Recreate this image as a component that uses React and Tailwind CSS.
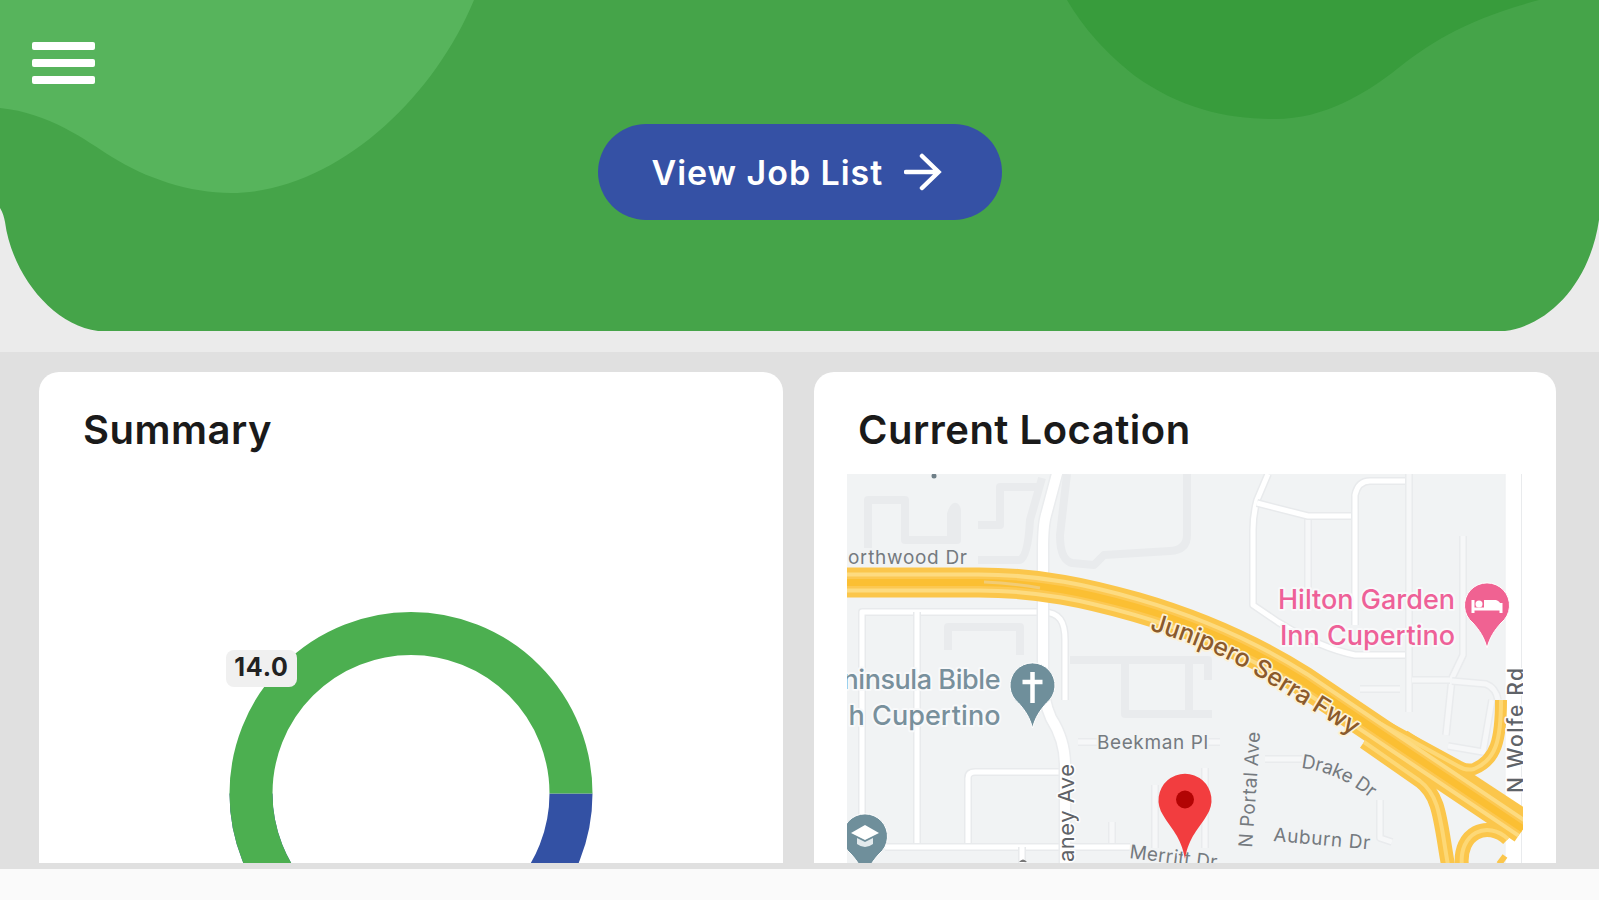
const minorRoads = [
  'M862 863 V612 H1042 C1060 612 1065 622 1065 640 V700',
  'M917 612 V847',
  'M968 846 V778 Q968 772 975 772 H1062',
  'M885 847 H1130',
  'M1268 474 L1257 500 Q1253 515 1253 530 V605 L1278 622 Q1320 648 1355 655 H1405',
  'M1257 503 L1308 516 H1355',
  'M1355 625 V495 Q1358 481 1370 481 H1405',
  'M1022 847 V863',
];

const faintRoads = [
  'M1308 516 V600',
  'M1409 474 V712',
  'M1463 536 V655 L1452 678 L1446 735',
  'M1452 681 L1486 684 Q1496 688 1498 700',
  'M1448 746 L1483 752 L1492 700',
  'M1412 680 H1450',
  'M1360 689 H1400',
  'M1265 759 H1302',
  'M1380 800 V838 L1392 842',
  'M1112 822 V848',
  'M1155 785 V848',
  'M1205 768 V848',
  'M1078 742 H1098',
  'M1208 742 H1220',
];

const blocks = [
  'M868 548 V500 H905 V540 H957 V510 Q955 502 951 514 V540',
  'M978 525 H1000 V487 H1040',
  'M978 560 H1020 Q1028 556 1030 520 L1042 478',
  'M1067 474 L1060 535 Q1060 560 1072 563 L1094 565 L1104 555 L1170 551 Q1187 550 1187 535 V474',
  'M948 650 V627 H1020 V655',
  'M1070 660 H1208 V680',
  'M1125 662 V714 H1212',
  'M1189 662 V712',
  'M1078 742 H1095',
];

const freeway = 'M847 582.5 H975 C1040 582 1090 594 1136 607 C1195 624 1254 650 1303 681 L1380 733 L1523 829';
const eastRamp = 'M1501 700 C1501 740 1496 760 1474 769 Q1466 771 1458 766 L1370 718';
const westRamp = 'M1364 742 L1420 781 C1440 796 1440 820 1448 865';
const loopRamp = 'M1462 867 C1458 832 1488 820 1508 839';

function Road({ d, width, color, casing }) {
  return (
    <>
      <path d={d} stroke={casing} strokeWidth={width + 3} />
      <path d={d} stroke={color} strokeWidth={width} />
    </>
  );
}

function PlacePin({ x, y, color, children }) {
  return (
    <g transform={`translate(${x} ${y})`}>
      <path d="M0 43 C-3 32 -7 26 -14 18 A22.5 22.5 0 1 1 14 18 C7 26 3 32 0 43Z" fill={color} stroke="#fff" strokeWidth="1" />
      {children}
    </g>
  );
}

function MapView() {
  return (
    <svg viewBox="847 474 676 389" className="block h-[389px] w-[676px]" fill="none" fontFamily="Inter, sans-serif">
      <defs>
        <path id="drake" d="M1301 768 Q1340 772 1375 802" />
        <path id="junipero" d="M1149 630 C1190 642 1225 656 1257 676 L1365 743" />
      </defs>
      <rect x="847" y="474" width="676" height="389" fill="#f1f3f4" />

      <g stroke="#e9ebed" strokeWidth="8" strokeLinejoin="round">
        {blocks.map(d => <path key={d} d={d} />)}
      </g>

      <g strokeLinejoin="round">
        {faintRoads.map(d => <Road key={d} d={d} width={5} color="#f6f7f8" casing="#e9ebed" />)}
        {minorRoads.map(d => <Road key={d} d={d} width={5} color="#ffffff" casing="#e8eaec" />)}
        <Road d="M1058 470 L1046 515 Q1043 525 1043 550 V680 Q1043 700 1051 718 Q1065 740 1065 765 V863" width={10} color="#ffffff" casing="#eaecee" />
      </g>

      {/* Wolfe Rd */}
      <rect x="1504.500" y="474" width="19" height="389" fill="#fff" />
      <path d="M1505 474 V863 M1521.500 474 V863" stroke="#e9ebed" />

      {/* freeway and its ramps */}
      <g strokeLinejoin="round">
        <path d={eastRamp} stroke="#fbc64b" strokeWidth="12" />
        <path d={westRamp} stroke="#fbc64b" strokeWidth="14" />
        <path d={loopRamp} stroke="#fbc64b" strokeWidth="14" />
        <path d="M1499 864 L1505 856" stroke="#fbc64b" strokeWidth="6" />
        <path d={freeway} stroke="#fbc64b" strokeWidth="30" />
        <path d="M1400 742 L1523 823" stroke="#fbc64b" strokeWidth="27" />
        <path d={eastRamp} stroke="#fdd876" strokeWidth="4" />
        <path d={westRamp} stroke="#fdd876" strokeWidth="4" />
        <path d={loopRamp} stroke="#fdd876" strokeWidth="4" />
        <path d={freeway} stroke="#fddb80" strokeWidth="20" />
        <path d={freeway} stroke="#fcc852" strokeWidth="12" />
        <path d={freeway} stroke="#fbbf33" strokeWidth="7" />
        <path d="M984 582 Q1012 583 1040 588" stroke="#f2cc75" strokeWidth="3" />
      </g>

      {/* street names */}
      <g fill="#757a7f" fontSize="19" stroke="#f1f3f4" strokeWidth="4" strokeLinejoin="round" className="[paint-order:stroke]">
        <text x="848" y="564" textLength="119">orthwood Dr</text>
        <text x="1097" y="749" textLength="111">Beekman Pl</text>
        <text transform="translate(1252 848) rotate(-86)" textLength="116">N Portal Ave</text>
        <text textLength="77"><textPath href="#drake">Drake Dr</textPath></text>
        <text transform="translate(1273 841) rotate(5)" textLength="97">Auburn Dr</text>
        <text transform="translate(1129 858) rotate(7)" textLength="88">Merritt Dr</text>
      </g>
      <g fill="#5f6368" stroke="#fff" strokeWidth="3" strokeLinejoin="round" className="[paint-order:stroke]">
        <text transform="translate(1074 764) rotate(-90)" textAnchor="end" fontSize="22" textLength="98">aney Ave</text>
        <text transform="translate(1523 793) rotate(-90)" textLength="125" fontSize="21" fontWeight="500">N Wolfe Rd</text>
      </g>
      <circle cx="934" cy="476" r="2.500" fill="#6f7f88" />
      <path d="M1019 862 q4 -5 8 0z" fill="#777" />

      <text fontSize="25" fontWeight="500" fill="#8b5a2b" stroke="#fdf1d5" strokeWidth="3.500" strokeLinejoin="round" textLength="231" className="[paint-order:stroke]">
        <textPath href="#junipero">Junipero Serra Fwy</textPath>
      </text>

      <g fontSize="27" fontWeight="500" stroke="#f8f9fa" strokeWidth="4" strokeLinejoin="round" className="[paint-order:stroke]">
        <g fill="#ee6198">
          <text x="1278" y="608.500" textLength="177">Hilton Garden</text>
          <text x="1280" y="645" textLength="175">Inn Cupertino</text>
        </g>
        <g fill="#78909c" textAnchor="end">
          <text x="1000.500" y="689" textLength="158">ninsula Bible</text>
          <text x="1000.500" y="725" textLength="152">h Cupertino</text>
        </g>
      </g>

      <PlacePin x={1487} y={605} color="#f06292">
        <path d="M-14 8 V-5 M14 8 V-2 M-14 4 H14 M-2 0 H12" stroke="#fff" strokeWidth="3" />
        <path d="M-3 3 V-5 H9 Q14 -4 14 3Z" fill="#fff" />
        <circle cx="-8" cy="-1" r="3.500" fill="#fff" />
      </PlacePin>
      <PlacePin x={1032.500} y={685} color="#6f8f9b">
        <path d="M0 -13 V18 M-10 -3 H10" stroke="#fff" strokeWidth="4.500" />
      </PlacePin>
      <PlacePin x={865} y={836} color="#6f8f9b">
        <path d="M-14 -3 L0 -11 L14 -3 L0 4Z" fill="#fff" />
        <path d="M-8 2 V8 Q0 14 8 8 V2 L0 6Z" fill="#e3eaed" />
      </PlacePin>
      <path d="M1185 859 C1181 836 1171 829 1163 815 A26.500 26.500 0 1 1 1207 815 C1199 829 1189 836 1185 859Z" fill="#f23d3f" />
      <circle cx="1185" cy="799.500" r="9" fill="#b20404" />
    </svg>
  );
}

function Donut() {
  return (
    <svg viewBox="0 0 364 252" className="block h-[252px] w-[364px]" fill="none" strokeWidth="43">
      <path d="M22 181.500 A160 160 0 0 0 342 181.500" stroke="#3351a4" />
      <path d="M182 341.500 A160 160 0 1 1 342 181.500" stroke="#4caf50" />
    </svg>
  );
}

function Card({ title, className, children }) {
  return (
    <section className={`h-[491px] overflow-hidden rounded-t-[20px] bg-white ${className}`}>
      <h2 className="pt-[34px] pl-11 text-[40px] leading-[48px] font-semibold tracking-[0.5px] text-[#1a1a1a]">{title}</h2>
      {children}
    </section>
  );
}

export default function App() {
  return (
    <div className="h-[900px] w-[1599px] overflow-hidden bg-[#fafafa] font-['Inter',sans-serif]">
      <div className="h-[352px] bg-[#ebebeb]">
        <header className="relative h-[331px] bg-[#45a449] [clip-path:path('M0_0H1599V220C1590_282_1550_325_1505_331H98C52_325_12_274_5_222C4_217_3_213_0_208Z')]">
          <svg viewBox="0 0 1599 331" className="absolute inset-0 h-full w-full">
            <path d="M0 0H474C432 102 332 193 231 193C190 193 145 178 112 157C85 140 50 113 0 108Z" fill="#57b45c" />
            <path d="M1067 0C1085 30 1105 52 1135 76C1180 108 1225 119 1275 119C1325 119 1365 93 1392 73C1430 42 1465 20 1539 0Z" fill="#389c3c" />
          </svg>
          <button className="absolute top-[42px] left-[31.500px] flex w-[63px] flex-col gap-[9px]">
            <span className="h-2 rounded-[2px] bg-white" />
            <span className="h-2 rounded-[2px] bg-white" />
            <span className="h-2 rounded-[2px] bg-white" />
          </button>
          <div className="relative flex justify-center pt-[124px]">
            <button className="flex h-24 w-[404px] items-center rounded-full bg-[#3551a5] pl-[54px] text-[34px] font-semibold text-white">
              <span className="w-[252px] text-left tracking-[0.95px] whitespace-nowrap">View Job List</span>
              <svg viewBox="0 0 38 38" className="h-[38px] w-[38px]" fill="none" stroke="#fff" strokeWidth="4.500" strokeLinecap="round">
                <path d="M2 19H34M18 3L34.500 19L18 35" />
              </svg>
            </button>
          </div>
        </header>
      </div>

      <main className="flex h-[517px] gap-[31px] bg-[#e0e0e0] pt-5 pl-[39px]">
        <Card title="Summary" className="w-[744px]">
          <div className="relative mt-[158px] ml-[190px]">
            <Donut />
            <span className="absolute top-[38px] -left-[3px] flex h-[37px] w-[71px] items-center justify-center rounded-lg bg-[#f0f0f0] pb-0.5 text-[25px] font-bold tracking-[0.8px] text-[#222]">14.0</span>
          </div>
        </Card>
        <Card title="Current Location" className="w-[742px]">
          <div className="mt-5 ml-[33px]">
            <MapView />
          </div>
        </Card>
      </main>
    </div>
  );
}
